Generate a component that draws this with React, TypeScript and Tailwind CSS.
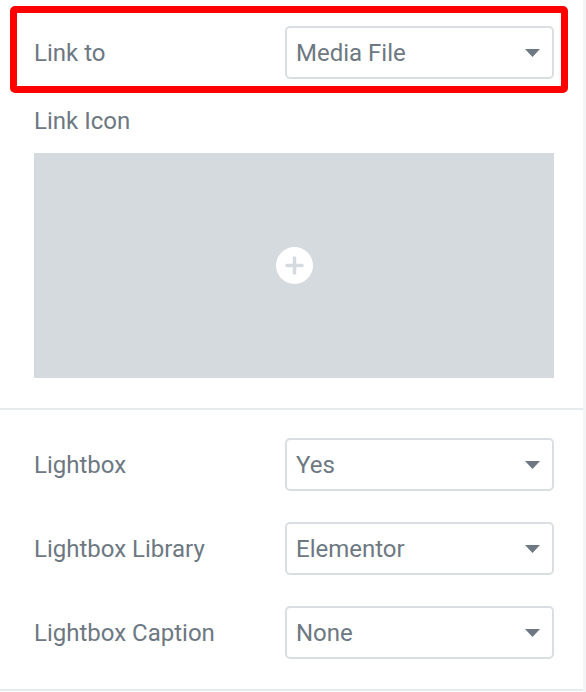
import React from "react"

function Caret() {
  return (
    <svg width="15" height="8" viewBox="0 0 15 8" className="shrink-0">
      <path d="M0 0 H15 L7.5 8 Z" fill="#6d7882" />
    </svg>
  )
}

function Select({ value }: { value: string }) {
  return (
    <div className="w-[269px] h-[53px] border-2 border-[#dadee3] rounded-[5px] flex items-center justify-between pl-[9px] pr-[12px]">
      <span>{value}</span>
      <Caret />
    </div>
  )
}

function Row({ label, value }: { label: string; value: string }) {
  return (
    <div className="flex items-center justify-between h-[53px]">
      <span>{label}</span>
      <Select value={value} />
    </div>
  )
}

export default function App() {
  return (
    <div className="relative w-[586px] h-[692px] bg-white flex text-[24px] leading-[28px] text-[#6d7882] font-['Roboto',sans-serif]">
      <div className="flex-1 flex flex-col">
        {/* Link section */}
        <div className="pl-[34px] pr-[29px] pt-[26px] pb-[30px]">
          <Row label="Link to" value="Media File" />
          <div className="mt-[28px]">Link Icon</div>
          <div className="mt-[18px] h-[225px] bg-[#d5dadf] flex items-center justify-center">
            <div className="w-[37px] h-[37px] rounded-full bg-white flex items-center justify-center">
              <svg width="19" height="19" viewBox="0 0 19 19">
                <path d="M9.5 2 V17 M2 9.5 H17" stroke="#d5dadf" strokeWidth="3.5" strokeLinecap="round" />
              </svg>
            </div>
          </div>
        </div>

        <div className="h-[2px] bg-[#e8ebee]" />

        {/* Lightbox section */}
        <div className="pl-[34px] pr-[29px] pt-[28px] pb-[30px] flex flex-col gap-[31px]">
          <Row label="Lightbox" value="Yes" />
          <Row label="Lightbox Library" value="Elementor" />
          <Row label="Lightbox Caption" value="None" />
        </div>

        <div className="h-[2px] bg-[#e8ebee]" />
      </div>
      <div className="w-[3px] bg-[#f3f4f6]" />

      {/* highlight annotation */}
      <div className="absolute left-[10px] top-[6px] w-[558px] h-[87px] border-[7px] border-[#ff0000] rounded-[5px]" />
    </div>
  )
}
